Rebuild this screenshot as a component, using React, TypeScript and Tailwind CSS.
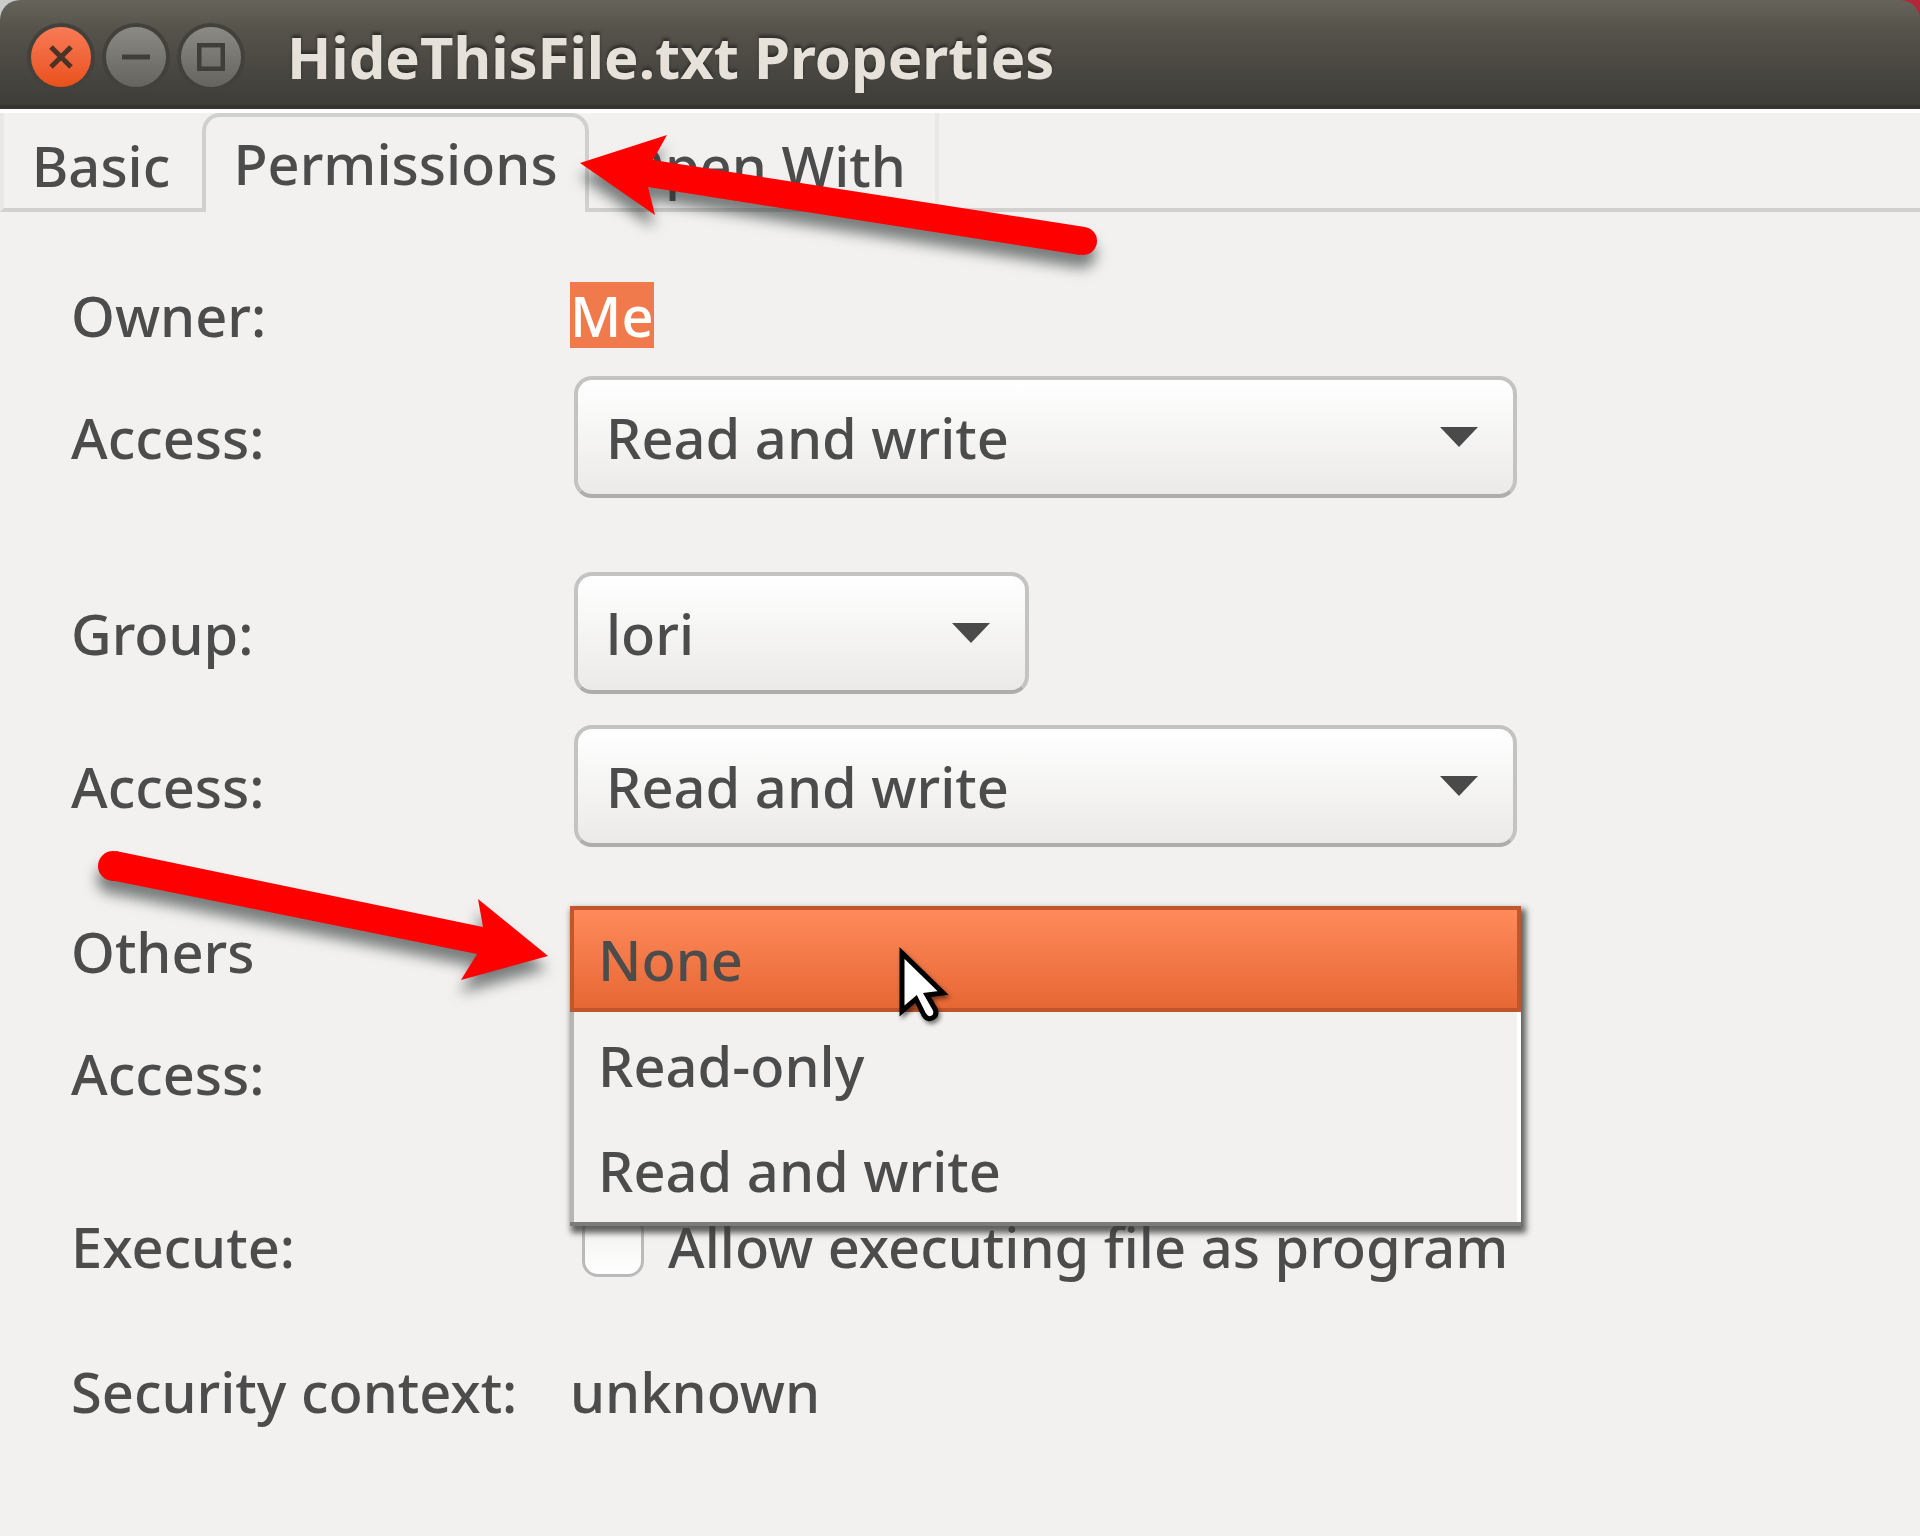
import type { ReactNode } from "react";

const INK = "text-[#4c4c4c]";

function RedArrow({ d, className, viewBox, tail }: { d: string; className: string; viewBox: string; tail: [number, number, number] }) {
  return (
    <svg
      aria-hidden="true"
      viewBox={viewBox}
      className={`pointer-events-none absolute z-20 overflow-visible fill-[#ff0000] drop-shadow-[-1px_13px_7px_rgba(40,48,48,0.6)] ${className}`}
    >
      <path d={d} />
      <circle cx={tail[0]} cy={tail[1]} r={tail[2]} />
    </svg>
  );
}

function Combo({ id, value, options, className }: { id: string; value: string; options: string[]; className: string }) {
  return (
    <div className={`relative ml-1 ${className}`}>
      <select
        id={id}
        defaultValue={value}
        className={`h-[122px] w-full appearance-none rounded-[18px] border-4 border-[#c3c3c1] border-b-[#adadab] bg-linear-to-b from-white to-[#ebeae8] pl-7 pr-24 ${INK}`}
      >
        {options.map((o) => (
          <option key={o}>{o}</option>
        ))}
      </select>
      <svg
        aria-hidden="true"
        viewBox="0 0 38 20"
        className="pointer-events-none absolute right-[39px] top-[51px] h-5 w-[38px] fill-[#4a4a4a]"
      >
        <path d="M0 0H38L19 20Z" />
      </svg>
    </div>
  );
}

function Row({ label, htmlFor, className = "", overlay, children }: { label: string; htmlFor?: string; className?: string; overlay?: ReactNode; children?: ReactNode }) {
  return (
    <div className={`flex items-center ${className}`}>
      <div className="relative w-[499px] shrink-0">
        {htmlFor ? <label htmlFor={htmlFor}>{label}</label> : <span>{label}</span>}
        {overlay}
      </div>
      {children}
    </div>
  );
}

const ACCESS = ["None", "Read-only", "Read and write"];

export default function App() {
  return (
    <div className={`min-h-screen overflow-hidden bg-[#f2f1ef] font-['Noto_Sans','Open_Sans',sans-serif] text-[56px] font-medium leading-[66px] ${INK}`}>
      <div className="bg-linear-to-r from-[#c9cccb] from-50% to-[#b3263a] to-50%">
        <header className="flex h-[109px] items-center rounded-t-[20px] border-b-4 border-[#35342e] bg-linear-to-b from-[#66635a] via-[#55524a] via-30% to-[#3e3d38] pl-[31px] pt-2">
          <div className="flex gap-[15px]">
            <button aria-label="Close" className="grid size-[60px] place-items-center rounded-full bg-linear-to-b from-[#f87a55] to-[#ea5018] shadow-[0_0_0_4px_#43413b]">
              <svg viewBox="0 0 24 24" className="size-6 fill-none stroke-[#4c3328] stroke-5">
                <path d="M2 2L22 22M22 2L2 22" />
              </svg>
            </button>
            <button aria-label="Minimize" className="grid size-[60px] place-items-center rounded-full bg-linear-to-b from-[#8c8a84] to-[#65645f] shadow-[0_0_0_4px_#43413b]">
              <svg viewBox="0 0 28 28" className="size-7 fill-none stroke-[#403e39] stroke-5">
                <path d="M0 14H28" />
              </svg>
            </button>
            <button aria-label="Maximize" className="grid size-[60px] place-items-center rounded-full bg-linear-to-b from-[#8c8a84] to-[#65645f] shadow-[0_0_0_4px_#43413b]">
              <svg viewBox="0 0 28 28" className="size-7 fill-none stroke-[#403e39] stroke-5">
                <path d="M2 2H26V26H2Z" />
              </svg>
            </button>
          </div>
          <h1 className="ml-[46px] text-[58px] font-bold text-[#e6e2da] [text-shadow:0_-3px_3px_#302f2b]">HideThisFile.txt Properties</h1>
        </header>
      </div>

      <nav role="tablist" className="relative flex h-[103px] items-stretch border-t-4 border-white">
        <button role="tab" aria-selected="false" className="w-[202px] border-b-4 border-l-4 border-b-[#d0d0ce] border-l-[#e9e8e6] pb-1 pr-1 pt-3 text-center">
          Basic
        </button>
        <button role="tab" aria-selected="true" className="w-[387px] rounded-t-[18px] border-x-4 border-t-4 border-[#d0d0ce] pb-1 text-center">
          Permissions
        </button>
        <button role="tab" aria-selected="false" className="w-[350px] border-b-4 border-r-4 border-b-[#d0d0ce] border-r-[#e9e8e6] pb-1 pl-8 pt-3 text-left">
          Open With
        </button>
        <div className="flex-1 border-b-4 border-[#d0d0ce]" />
        <RedArrow
          className="left-[580px] top-[22px] h-[120px] w-[520px]"
          viewBox="580 135 520 120"
          d="M580 163L667 135L653 160L1085 227L1080 255L648 187L655 215Z"
          tail={[1083, 241, 14]}
        />
      </nav>

      <main className="px-[71px] pt-[70px]">
        <Row label="Owner:">
          <span className="bg-[#f07a4b] text-white">Me</span>
        </Row>
        <Row label="Access:" htmlFor="owner-access" className="mt-[28px]">
          <Combo id="owner-access" value="Read and write" options={ACCESS} className="w-[943px]" />
        </Row>
        <Row label="Group:" htmlFor="group" className="mt-[74px]">
          <Combo id="group" value="lori" options={["lori"]} className="w-[455px]" />
        </Row>
        <Row label="Access:" htmlFor="group-access" className="mt-[31px]">
          <Combo id="group-access" value="Read and write" options={ACCESS} className="w-[943px]" />
        </Row>
        <Row
          label="Others"
          className="mt-[71px]"
          overlay={
            <RedArrow
              className="left-[27px] top-[-68px] h-[130px] w-[450px]"
              viewBox="98 850 450 130"
              d="M116 851L483 927L478 899L548 956L461 980L477 954L110 880Z"
              tail={[113, 866, 15]}
            />
          }
        />
        <Row label="Access:" className="relative mt-[28px] h-[122px]">
          <div className="absolute left-[499px] top-[-106px] z-10 w-[951px]">
            <div
              role="listbox"
              aria-label="Others access"
              className="flex flex-col border-b-4 border-[#7b7b79] bg-[#f2f1ef] shadow-[3px_5px_6px_2px_rgba(60,60,60,0.8)]"
            >
              <button role="option" aria-selected="true" className="h-[106px] border-4 border-[#c0562c] bg-linear-to-b from-[#ff8a5b] to-[#e66733] pl-6 text-left">
                None
              </button>
              <button role="option" aria-selected="false" className="h-[106px] border-x-4 border-l-[#b5b5b3] border-r-white pl-6 text-left">
                Read-only
              </button>
              <button role="option" aria-selected="false" className="h-[104px] border-x-4 border-l-[#b5b5b3] border-r-white pl-6 text-left">
                Read and write
              </button>
            </div>
            <svg
              aria-hidden="true"
              viewBox="0 0 50 78"
              className="pointer-events-none absolute left-[328px] top-[39px] h-[78px] w-[50px] overflow-visible drop-shadow-[2px_3px_2px_rgba(0,0,0,0.5)]"
            >
              <path d="M4 8V66L18 54L26 70Q31 77 37 71Q39 68 37 64L29 50L45 48Z" className="fill-white stroke-black stroke-5" />
            </svg>
          </div>
        </Row>
        <Row label="Execute:" className="mt-[79px]">
          <input
            id="exec"
            type="checkbox"
            className="ml-3 size-[62px] shrink-0 appearance-none rounded-[16px] border-3 border-[#bababa] bg-linear-to-b from-[#f0f0ee] to-white"
          />
          <label htmlFor="exec" className="ml-6">
            Allow executing file as program
          </label>
        </Row>
        <Row label="Security context:" className="mt-[79px] pb-16">
          <span>unknown</span>
        </Row>
      </main>
    </div>
  );
}
